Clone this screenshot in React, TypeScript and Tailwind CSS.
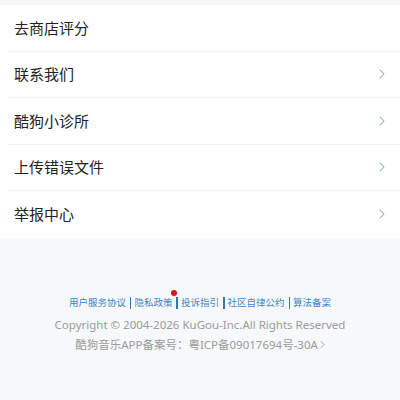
import React from "react";

const items = [
  { label: "去商店评分", arrow: false },
  { label: "联系我们", arrow: true },
  { label: "酷狗小诊所", arrow: true },
  { label: "上传错误文件", arrow: true },
  { label: "举报中心", arrow: true },
];

const links = ["用户服务协议", "隐私政策", "投诉指引", "社区自律公约", "算法备案"];

const Chevron = ({ className = "" }: { className?: string }) => (
  <svg viewBox="0 0 10 14" className={className} fill="none">
    <path d="M2.5 2l5 5-5 5" stroke="#8aa4b8" strokeWidth="1.3" strokeLinecap="round" strokeLinejoin="round" />
  </svg>
);

export default function App() {
  return (
    <div
      className="w-[400px] h-[400px] bg-[#f7f8fa] overflow-hidden"
      style={{ fontFamily: '"Noto Sans", "Noto Sans CJK SC", sans-serif' }}
    >
      <div className="h-[5px]" />
      <div className="bg-white">
        {items.map((it, i) => (
          <div key={it.label} className="pl-[8px]">
            <div
              className={`h-[46.5px] flex items-center justify-between pl-[6px] pr-[14px] ${
                i < items.length - 1 ? "border-b border-[#f2f2f2]" : ""
              }`}
            >
              <span className="text-[15px] text-[#222]">{it.label}</span>
              {it.arrow && <Chevron className="w-[8px] h-[12px]" />}
            </div>
          </div>
        ))}
      </div>

      <div className="pt-[59px] flex flex-col items-center">
        <div className="flex items-center text-[9.5px] leading-none text-[#3d86c6]">
          {links.map((l, i) => (
            <React.Fragment key={l}>
              {i > 0 && <span className="ml-[4px] mr-[3px] w-[1.5px] h-[12px] bg-[#3176b5]" />}
              <span className={i === 1 ? "relative" : ""}>
                {l}
                {i === 1 && (
                  <span className="absolute -top-[8px] -right-[5px] w-[6px] h-[6px] rounded-full bg-[#d9141b]" />
                )}
              </span>
            </React.Fragment>
          ))}
        </div>
        <div className="mt-[10px] text-[11.5px] text-[#9b9b9b] leading-none">
          Copyright © 2004-2026 KuGou-Inc.All Rights Reserved
        </div>
        <div className="mt-[9px] flex items-center text-[11.5px] text-[#9b9b9b] leading-none">
          <span>酷狗音乐APP备案号：粤ICP备09017694号-30A</span>
          <svg viewBox="0 0 6 10" className="w-[5px] h-[9px] ml-[2px]" fill="none">
            <path d="M1 1l4 4-4 4" stroke="#9b9b9b" strokeWidth="1" />
          </svg>
        </div>
      </div>
    </div>
  );
}
